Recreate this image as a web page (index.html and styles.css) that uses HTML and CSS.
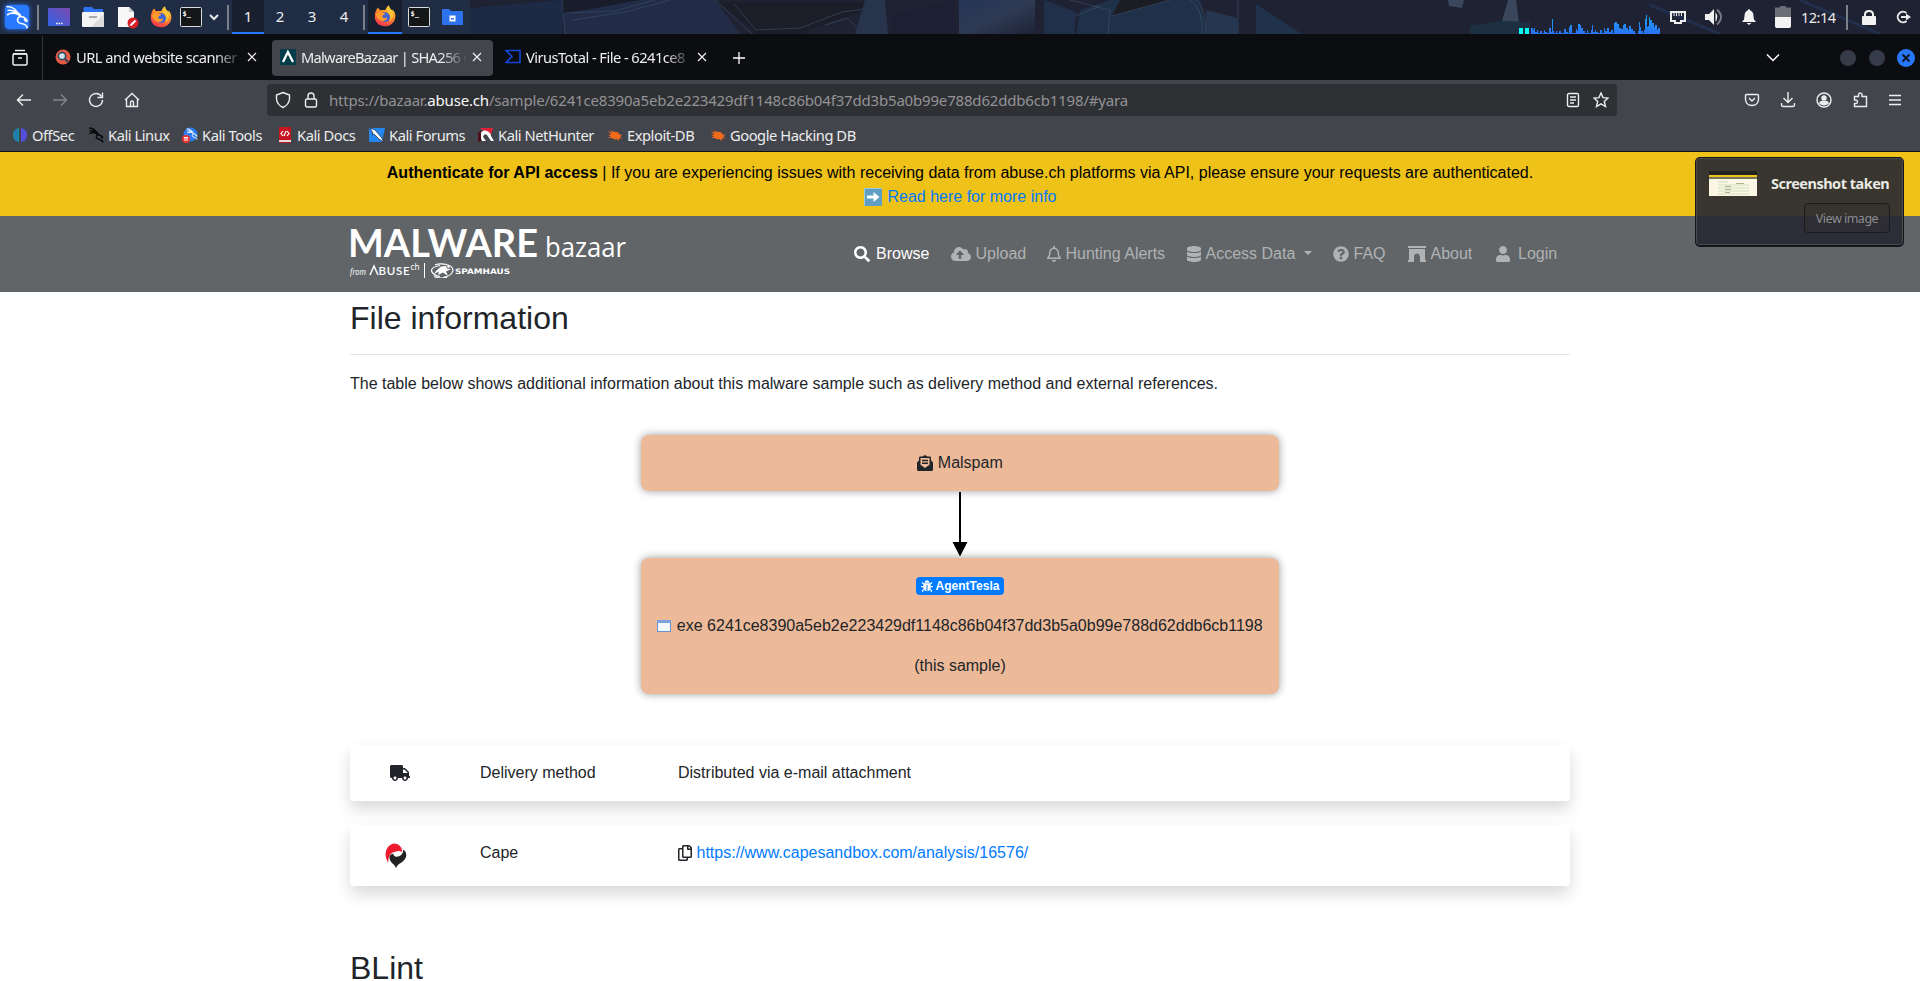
FILE: index.html
```html
<!DOCTYPE html>
<html lang="en">
<head>
<meta charset="utf-8">
<title>MalwareBazaar | SHA256</title>
<link rel="stylesheet" href="styles.css">
</head>
<body>
<svg class="defs" width="0" height="0">
  <defs>
    <linearGradient id="ffBody" x1="0.8" y1="0" x2="0.3" y2="1"><stop offset="0" stop-color="#ffd93a"/><stop offset=".45" stop-color="#ff8a2a"/><stop offset="1" stop-color="#f5314f"/></linearGradient>
    <linearGradient id="desk" x1="0" y1="1" x2="1" y2="0"><stop offset="0" stop-color="#2f62e6"/><stop offset="1" stop-color="#7c4bb0"/></linearGradient>
    <linearGradient id="cpu" x1="0" y1="0" x2="0" y2="1"><stop offset="0" stop-color="#18a4f0"/><stop offset="1" stop-color="#2a72f6"/></linearGradient>
    <linearGradient id="glassA" x1="0" y1="0" x2="1" y2="1"><stop offset="0" stop-color="#243556"/><stop offset=".5" stop-color="#2f3a54"/><stop offset="1" stop-color="#1c2335"/></linearGradient>
    <symbol id="firefox" viewBox="0 0 22 22"><path d="M1 8.500C2 5 3 3.500 4.500 2.500C4.500 4 5.500 5 7 5.200C9 5 10.500 5 11.500 5C12 3 13 1.500 15 .5C15.200 3.500 17 4 18.500 6C18.700 5 18.500 4.500 18.300 4C21 7 21.800 9.500 21.200 13C20.300 18 16 21.300 11 21.300C5 21.300 .7 17 .8 11.500z" fill="url(#ffBody)"/><circle cx="11" cy="12.200" r="4.900" fill="#3d63d8"/><path d="M2 9C4 6.200 7 6.500 9 8L11.500 8.500C10 10 8.500 10 8.300 11.500C9 14 12 13 13 12C13.500 15 10 17 7 15.800C3.500 14.500 2 12 2 9z" fill="#ff9a2c"/><path d="M15 .5C11 3 13 7 15.500 9C17 11.500 16.500 15 14.500 17C20 14 20 8 18 5.500C16.500 4 15.300 3.500 15 .5z" fill="#ffc534"/></symbol>
    <symbol id="term" viewBox="0 0 22 20"><rect x=".5" y=".5" width="21" height="19" rx="1" fill="#151617" stroke="#d9dadb"/><text x="2.500" y="9" class="term-prompt" fill="#fff">$_</text></symbol>
    <symbol id="dragon" viewBox="0 0 24 24"><path d="M1.500 1.500Q6.500 1.500 9.500 4L13 8M2.500 5.500Q8 4.500 13 8M2 10Q7 6.500 13 8M6 8.500Q12 7.500 15 11.500M13 8Q16 10 15.500 11.500Q12.500 12 12.500 15Q13 18.500 17.500 18.800Q21.500 19.500 22.500 23.500M15.500 11.500Q20 11.500 22.500 16.500M19 14L21.500 17" fill="none"/></symbol>
    <symbol id="spider" viewBox="0 0 16 16"><path d="M1 4L5 6L4 3L7 5C9 4 12 5 13 8L15 7L13.500 10L15 12L12 11C12 12 12 13 11 14L10 12C8 13 6 12 5 11L1 11L4 9.500L1 8L4 8z" fill="#f06a1c"/></symbol>
  </defs>
</svg>

<header class="panel">
  <svg class="wallpaper" viewBox="0 0 1920 34" preserveAspectRatio="none">
    <rect width="1920" height="34" fill="#1e2233"/>
    <rect width="470" height="34" fill="#212c45"/>
    <path d="M470 8L562 0V34H470z" fill="#1d2a45"/>
    <path d="M562 0H690L562 14z" fill="#191c2a"/><path d="M562 14L640 0H715L740 34H564z" fill="#222c47"/>
    <path class="edge" d="M562 0L565 34M565 13L615 11L655 0M572 20L625 12L670 0M715 0L752 34"/>
    <path d="M718 2H862L868 9L830 22L798 34H758z" fill="#1b1d29"/><path class="edge" d="M734 4L756 30L800 28L842 12L865 9M825 25L848 18L858 30"/>
    <path d="M865 0H885L888 34H855z" fill="#28344c"/><path d="M890 15L956 0V34H893z" fill="#1d2033"/>
    <path d="M959 0H1035V34H959z" fill="url(#glassA)"/><path d="M1044 0L1076 12L1074 34H1044z" fill="#20304a"/>
    <path d="M1080 10L1110 0H1200L1208 34H1076z" fill="#1f3149"/><path d="M1120 0H1170L1112 16z" fill="#1c1c23"/>
    <path class="edge" d="M1070 0L1110 10L1108 34M1076 16L1100 6M1190 0C1204 12 1200 20 1203 34M1196 0C1208 12 1204 22 1206 34M1238 0V34M1112 16L1170 0"/>
    <path d="M1206 10L1238 18V34H1206z" fill="#263550"/><path d="M1256 4L1302 34H1256z" fill="#1f314b"/>
    <path d="M1448 0H1464L1462 8L1449 6zM1508 0L1502 21L1519 23L1516 0z" fill="#39465c"/><path d="M1470 26L1502 21L1530 22V34H1470z" fill="#1d3042"/>
    <path d="M1650 5L1720 34M1800 0L1880 34" stroke="#222f4c" stroke-width="3" fill="none"/>
  </svg>
  <div class="panel-left">
    <svg class="kali" width="24" height="24" viewBox="0 0 24 24"><rect width="24" height="24" rx="3" fill="#2879ff"/><use href="#dragon" stroke="#fff" stroke-width="1.600"/></svg>
    <i class="sep"></i>
    <svg width="22" height="18"><rect width="22" height="18" rx="1" fill="url(#desk)"/><path d="M8 15.500h1.500M10.500 15.500H12M13 15.500h1.500" stroke="#fff" stroke-width="1.500"/></svg>
    <svg width="22" height="20"><path d="M1.500 1Q1.500 0 2.500 0H10L12 2H20Q21 2 21 3V8H1.500z" fill="#2c72ec"/><rect y="5" width="22" height="15" rx="1" fill="#f3f3f3"/><path d="M22 7V20H9z" fill="#dcdcdc"/><path d="M7 10h8" stroke="#aaa" stroke-width="2"/></svg>
    <svg class="doc" width="22" height="23"><path d="M1 1H12L17 6V21H1z" fill="#f7f7f7"/><path d="M12 1V6H17z" fill="#ccc"/><circle cx="16" cy="17" r="5.500" fill="#d81f26"/><path d="M13.500 19.500L18.500 14.500" stroke="#fff" stroke-width="2"/></svg>
    <svg class="ff" width="22" height="22"><use href="#firefox"/></svg>
    <svg class="tm" width="22" height="20"><use href="#term"/></svg>
    <svg class="chev" width="10" height="7"><path d="M1 1L5 5L9 1" stroke="#e8e9eb" stroke-width="2" fill="none"/></svg>
    <i class="sep"></i>
    <div class="spaces"><span class="on">1</span><span>2</span><span>3</span><span>4</span></div>
    <i class="sep"></i>
    <span class="task on"><svg width="22" height="22"><use href="#firefox"/></svg></span>
    <span class="task"><svg width="22" height="20"><use href="#term"/></svg></span>
    <span class="task"><svg width="22" height="17"><path d="M0 1Q0 0 1 0H7L9 2H20Q21 2 21 3V16H1Q0 16 0 15z" fill="#2c72ec"/><rect x="7.500" y="6.500" width="6" height="6" fill="#fff"/><rect x="9" y="9" width="3" height="1.500" fill="#2c72ec"/></svg></span>
  </div>
  <div class="panel-right">
    <svg class="graph" width="141" height="34" viewBox="0 0 141 34"><path d="M0 28h4v6H0zM6 28h4v6H6z" fill="#0fe"/><path fill="url(#cpu)" d="M12 34V28h2V30h1V28h1V32h2V30h1V33h2V31h2V33h2V30h1V32h2V33h2V28h2V32h1V19h1V31h1V33h2V31h1V33h2V31h2V33h3V29h2V32h2V33h1V27h1V25h2V33h4V29h1V31h1V24h2V25h1V28h2V31h2V33h2V30h1V33h3V30h1V25h1V32h2V30h1V32h2V33h2V30h2V33h2V28h1V31h2V28h2V32h2V30h2V33h1V23h1V22h2V24h2V28h2V29h2V25h1V24h2V28h2V30h1V26h2V29h2V31h2V33h1V34h2V31h1V22h1V27h1V31h2V33h1V30h1V19h1V15h1V27h1V26h1V17h1V20h2V23h2V27h1V25h2V30h1V28h2V33h1V31h1V34h2V31h1V27h2V28h1V34z"/></svg>
    <svg width="18" height="15"><path d="M2 2H16V11H12V13H6V11H2z" fill="none" stroke="#eceded" stroke-width="2"/><path d="M5 2v4M7.500 2v4M10 2v4M12.500 2v4" stroke="#eceded"/></svg>
    <svg width="18" height="18"><path d="M0 6H4L9 1V17L4 12H0z" fill="#f0f0f0"/><path d="M10.500 4Q14 9 10.500 14z" fill="#f0f0f0"/><path d="M12 1.500Q20 9 12 16.500" stroke="#767a82" stroke-width="2" fill="none"/></svg>
    <svg width="14" height="16"><path d="M7 0Q8.300 .5 8.300 1.500Q11.500 2.500 11.500 7L12 10.500L14 13H0L2 10.500L2.500 7Q2.500 2.500 5.700 1.500Q5.700 .5 7 0zM4.500 14H9.500L7 16z" fill="#f1f1f1"/></svg>
    <svg width="16" height="22"><path d="M5 0H11V1.500H16V20Q16 22 14 22H2Q0 22 0 20V1.500H5z" fill="#6b6e76"/><path d="M0 11H16V20Q16 22 14 22H2Q0 22 0 20z" fill="#f3f3f3"/></svg>
    <time>12:14</time>
    <i class="sep"></i>
    <svg width="14" height="15"><rect y="6" width="14" height="9" rx="1" fill="#f1f1f1"/><path d="M3 7V4.500Q3 1 7 1Q11 1 11 4.500V7" stroke="#f1f1f1" stroke-width="2" fill="none"/></svg>
    <svg width="15" height="14"><path d="M10.500 3A5.300 5.300 0 1 0 10.500 11" stroke="#e6e7e8" stroke-width="2" fill="none"/><path d="M5 7H10" stroke="#e6e7e8" stroke-width="2"/><path d="M10 3.500L15 7L10 10.500z" fill="#e6e7e8"/></svg>
  </div>
</header>

<nav class="tabs">
  <div class="all-tabs"><svg width="18" height="18" viewBox="0 0 18 18" fill="none" stroke="#eceded" stroke-width="1.500"><path d="M4 1.500H14M2 4.800H16"/><rect x="2" y="5" width="14" height="11" rx="1.500"/><path d="M7 9h4"/></svg></div>
  <div class="tab"><svg class="fav" width="16" height="16"><circle cx="8" cy="8" r="7.500" fill="#e45b45"/><circle cx="7" cy="7" r="3.600" fill="#cde3ee" stroke="#26445c" stroke-width="1.500"/><path d="M10 10L13 13" stroke="#26445c" stroke-width="2"/></svg><span class="t t1">URL and website scanner -</span><svg class="x" width="10" height="10"><path d="M1 1L9 9M9 1L1 9"/></svg></div>
  <div class="tab active"><svg class="fav" width="16" height="16"><rect width="16" height="16" fill="#053c4c"/><path d="M3 13L7.900 3L13 13" fill="none" stroke="#fff" stroke-width="2.300"/></svg><span class="t t2">MalwareBazaar | SHA256 6</span><svg class="x" width="10" height="10"><path d="M1 1L9 9M9 1L1 9"/></svg></div>
  <div class="tab"><svg class="fav" width="16" height="16"><path d="M1 1.500H15V13.500H1L7 7.500z" fill="none" stroke="#1247d8" stroke-width="1.600"/></svg><span class="t t3">VirusTotal - File - 6241ce8</span><svg class="x" width="10" height="10"><path d="M1 1L9 9M9 1L1 9"/></svg></div>
  <svg class="plus" width="12" height="12"><path d="M6 0V12M0 6H12" stroke="#fff" stroke-width="1.300"/></svg>
  <div class="win">
    <svg width="14" height="9"><path d="M1 1.500L7 7.500L13 1.500" stroke="#fff" stroke-width="1.500" fill="none"/></svg>
    <i></i><i></i><b><svg width="10" height="10"><path d="M1.500 1.500L8.500 8.500M8.500 1.500L1.500 8.500" stroke="#111728" stroke-width="2"/></svg></b>
  </div>
</nav>

<div class="toolbar">
  <div class="nav-icons">
    <svg width="16" height="16"><path d="M15 8H1.500M7 2.500L1.500 8L7 13.500"/></svg>
    <svg class="dim" width="16" height="16"><path d="M1 8H14.500M9 2.500L14.500 8L9 13.500"/></svg>
    <svg width="16" height="16"><path d="M13.500 4.500A6.500 6.500 0 1 0 14.500 8M14.500 .5V5.500H9.500"/></svg>
    <svg width="16" height="16"><path d="M1 8L8 1.500L15 8M2.500 7V14.500H13.500V7M6.500 14.500V10.500Q6.500 9 8 9Q9.500 9 9.500 10.500V14.500"/></svg>
  </div>
  <div class="url">
    <svg width="16" height="18"><path d="M8 1.500L14.500 4V8Q14 13.500 8 16.500Q2 13.500 1.500 8V4z"/></svg>
    <svg width="14" height="16"><rect x="1.500" y="7" width="11" height="8" rx="1.500"/><path d="M4 7V4Q4 1 7 1Q10 1 10 4V7"/></svg>
    <span class="addr">https://bazaar.<b>abuse.ch</b>/sample/6241ce8390a5eb2e223429df1148c86b04f37dd3b5a0b99e788d62ddb6cb1198/#yara</span>
    <svg class="reader" width="14" height="16"><rect x="1.500" y="1.500" width="11" height="13" rx="1.500"/><path d="M4 5H10M4 8H10M4 11H8"/></svg>
    <svg width="16" height="16"><path d="M8 1L10 5.600L15 6L11.300 9.400L12.500 14.500L8 11.800L3.500 14.500L4.700 9.400L1 6L6 5.600z"/></svg>
  </div>
  <div class="right-icons">
    <svg width="16" height="16"><path d="M2.500 2.500H13.500Q14.500 2.500 14.500 3.500V7.500Q14 13.500 8 13.500Q2 13.500 1.500 7.500V3.500Q1.500 2.500 2.500 2.500zM5 6L8 9L11 6"/></svg>
    <svg width="16" height="16"><path d="M8 0V10M3.500 6L8 10.500L12.500 6M1.500 11V12.500Q1.500 14.500 3.500 14.500H12.500Q14.500 14.500 14.500 12.500V11"/></svg>
    <svg width="16" height="16"><circle cx="8" cy="8" r="7"/><circle cx="8" cy="6" r="2" fill="#eceded"/><path d="M4 11.500Q4 9.500 6 9.500H10Q12 9.500 12 11.500Q8 14 4 11.500z" fill="#eceded"/></svg>
    <svg width="16" height="16"><path d="M2.500 5.500V4.500H6.500V2.500Q7 .8 8.500 1Q10 1 10 2.500V4.500H14.500V14.500H2.500V11.500H4Q5.500 11.500 5.500 9.800Q5.500 8 4 8H2.500z"/></svg>
    <svg width="14" height="12"><path d="M1 1.500H13M1 6H13M1 10.500H13"/></svg>
  </div>
</div>

<div class="bookmarks">
  <span class="bm b1"><svg width="16" height="16"><path d="M7 1V15Q1 14 1 8Q1 2 7 1z" fill="#168da0"/><path d="M9 1V15Q15 14 15 8Q15 2 9 1z" fill="#5a4be0"/><path d="M4 2V14M12 2V14" stroke="#3e5bd0"/></svg><span>OffSec</span></span>
  <span class="bm b2"><svg width="16" height="16"><use href="#dragon" stroke="#08090a" stroke-width="2.200"/></svg><span>Kali Linux</span></span>
  <span class="bm b3"><svg width="16" height="16"><circle cx="8.500" cy="7.500" r="7" fill="#2c7bef"/><svg x="4" y="1" width="12" height="12"><use href="#dragon" stroke="#fff" stroke-width="1.800"/></svg><circle cx="4" cy="12" r="4" fill="#e33"/><path d="M2 10.500H6M3 10.500V14M5 10.500V14" stroke="#fff"/></svg><span>Kali Tools</span></span>
  <span class="bm b4"><svg width="16" height="16"><rect x="2" width="12" height="16" rx="1" fill="#c81523"/><path d="M2 13H14V15H2z" fill="#e8d9d9"/><path d="M6 4L4 6.500L6 9M10 4L12 6.500L10 9M7 9L9 4" stroke="#fff" fill="none" stroke-width="1.200"/></svg><span>Kali Docs</span></span>
  <span class="bm b5"><svg width="16" height="16"><path d="M0 1H16L13 15H0z" fill="#2486ef"/><path d="M1 1L6 3L12 10L15 15L10 12L5 7L3 8L4 6z" fill="#fff" stroke="#17253d" stroke-width=".7"/></svg><span>Kali Forums</span></span>
  <span class="bm b6"><svg width="16" height="16"><path d="M2 1H15L12 10z" fill="#e2203a"/><path d="M2 8Q4 2 9 4Q13 6 13 9L16 14H13L9 8Q6 6 5 10L8 14H4z" fill="#fff"/><path d="M0 5L3 4V14L0 15z" fill="#4b101b"/></svg><span>Kali NetHunter</span></span>
  <span class="bm b7"><svg width="16" height="16"><use href="#spider"/></svg><span>Exploit-DB</span></span>
  <span class="bm b8"><svg width="16" height="16"><use href="#spider"/></svg><span>Google Hacking DB</span></span>
</div>

<div class="page">
  <div class="banner">
    <div><b>Authenticate for API access</b> | If you are experiencing issues with receiving data from abuse.ch platforms via API, please ensure your requests are authenticated.</div>
    <div class="more"><svg width="18" height="18"><rect width="18" height="18" rx="1.500" fill="#5f9fc4"/><path d="M.5 17.500V.5H17.500" stroke="#9ccbe2" fill="none"/><path d="M3 7.500H9.500V4L15.500 9L9.500 14V10.500H3z" fill="#fff"/></svg><a>Read here for more info</a></div>
  </div>
  <div class="site-nav">
    <svg class="logo" width="280" height="56" viewBox="0 0 280 56" fill="#fff">
      <text class="lg-main" x="-2" y="34.500" textLength="190" lengthAdjust="spacingAndGlyphs">MALWARE</text>
      <text class="lg-sub" x="195" y="34.500" textLength="81" lengthAdjust="spacingAndGlyphs">bazaar</text>
      <text class="lg-from" x="0" y="53" textLength="16" lengthAdjust="spacingAndGlyphs">from</text>
      <path d="M20 53L24 44L28 53" fill="none" stroke="#fff" stroke-width="1.500"/>
      <text class="lg-abuse" x="28.500" y="53" textLength="31" lengthAdjust="spacing">BUSE</text>
      <text class="lg-ch" x="60.500" y="48" textLength="9" lengthAdjust="spacingAndGlyphs">ch</text>
      <path d="M74 41h1v16h-1z"/>
      <path d="M90 43.500Q81 45 81.500 49Q83 53.500 90 54.500M95 42.500Q103 43.500 103 48.500Q102 54 93 55.500M85 42.800Q90 41 97 42.500M84 54.500Q90 57 97 55.500" fill="none" stroke="#fff" stroke-width="1.200"/>
      <path d="M96 44L91 44.500L86 49L84 52L89 49.500L88 53L93 50.500L98 54L96 49.500L101 47L97 46.500z"/><circle cx="98.500" cy="44.500" r="1.300"/>
      <text class="lg-spam" x="105" y="51.500" textLength="55" lengthAdjust="spacingAndGlyphs">SPAMHAUS</text>
    </svg>
    <div class="links">
      <a class="on l1"><svg width="16" height="16" viewBox="0 0 512 512"><path d="M505 442.700L405.300 343c-4.500-4.500-10.600-7-17-7H372c27.600-35.300 44-79.700 44-128C416 93.100 322.900 0 208 0S0 93.100 0 208s93.100 208 208 208c48.300 0 92.700-16.400 128-44v16.300c0 6.400 2.500 12.500 7 17l99.700 99.700c9.400 9.400 24.600 9.400 33.900 0l28.300-28.300c9.400-9.400 9.400-24.600.1-34zM208 336c-70.700 0-128-57.200-128-128 0-70.700 57.200-128 128-128 70.700 0 128 57.200 128 128 0 70.700-57.200 128-128 128z"/></svg>Browse</a>
      <a class="l2"><svg width="20" height="16" viewBox="0 0 640 512"><path d="M537.600 226.600c4.100-10.700 6.400-22.400 6.400-34.600 0-53-43-96-96-96-19.700 0-38.100 6-53.300 16.200C367 64.200 315.300 32 256 32c-88.400 0-160 71.600-160 160 0 2.700.1 5.400.2 8.100C40.200 219.800 0 273.200 0 336c0 79.500 64.500 144 144 144h368c70.700 0 128-57.300 128-128 0-61.900-44-113.600-102.400-125.400zM393.400 288H328v112c0 8.800-7.200 16-16 16h-48c-8.800 0-16-7.200-16-16V288h-65.400c-14.300 0-21.400-17.200-11.300-27.300l105.400-105.400c6.200-6.200 16.400-6.200 22.600 0l105.400 105.400c10.100 10.100 2.900 27.300-11.300 27.300z"/></svg>Upload</a>
      <a class="l3"><svg width="14" height="16" viewBox="0 0 448 512"><path d="M439.390 362.290c-19.320-20.760-55.470-51.990-55.470-154.290 0-77.700-54.480-139.900-127.940-155.160V32c0-17.670-14.320-32-31.980-32s-31.980 14.330-31.980 32v20.840C118.560 68.100 64.080 130.300 64.080 208c0 102.300-36.150 133.530-55.470 154.290-6 6.450-8.660 14.160-8.610 21.710.11 16.400 12.980 32 32.100 32h383.800c19.120 0 32-15.600 32.100-32 .05-7.550-2.610-15.270-8.610-21.710zM67.530 368c21.220-27.970 44.420-74.330 44.530-159.420 0-.2-.06-.38-.06-.58 0-61.860 50.140-112 112-112s112 50.140 112 112c0 .2-.06.38-.06.58.11 85.100 23.310 131.460 44.530 159.420H67.530zM224 512c35.320 0 63.970-28.650 63.970-64H160.030c0 35.350 28.650 64 63.970 64z"/></svg>Hunting Alerts</a>
      <a class="l4"><svg width="14" height="16" viewBox="0 0 448 512"><path d="M448 73.143v45.714C448 159.143 347.667 192 224 192S0 159.143 0 118.857V73.143C0 32.857 100.333 0 224 0s224 32.857 224 73.143zM448 176v102.857C448 319.143 347.667 352 224 352S0 319.143 0 278.857V176c48.125 33.143 136.208 48.572 224 48.572S399.874 209.143 448 176zm0 160v102.857C448 479.143 347.667 512 224 512S0 479.143 0 438.857V336c48.125 33.143 136.208 48.572 224 48.572S399.874 369.143 448 336z"/></svg>Access Data<i class="caret"></i></a>
      <a class="l5"><svg width="16" height="16" viewBox="0 0 512 512"><path d="M504 256c0 136.997-111.043 248-248 248S8 392.997 8 256C8 119.083 119.043 8 256 8s248 111.083 248 248zM262.655 90c-54.497 0-89.255 22.957-116.549 63.758-3.536 5.286-2.353 12.415 2.715 16.258l34.699 26.310c5.205 3.947 12.621 3.008 16.665-2.122 17.864-22.658 30.113-35.797 57.303-35.797 20.429 0 45.698 13.148 45.698 32.958 0 14.976-12.363 22.667-32.534 33.976C247.128 238.528 216 254.941 216 296v4c0 6.627 5.373 12 12 12h56c6.627 0 12-5.373 12-12v-1.333c0-28.462 83.186-29.647 83.186-106.667 0-58.002-60.165-102-116.531-102zM256 338c-25.365 0-46 20.635-46 46 0 25.364 20.635 46 46 46s46-20.636 46-46c0-25.365-20.635-46-46-46z"/></svg>FAQ</a>
      <a class="l6"><svg width="18" height="16" viewBox="0 0 18 16"><path d="M0 0H18V2H0zM1 3H17V14H18V16H12V11Q12 7.500 9 7.500Q6 7.500 6 11V16H0V14H1z"/></svg>About</a>
      <a class="l7"><svg width="14" height="16" viewBox="0 0 448 512"><path d="M224 256c70.700 0 128-57.300 128-128S294.700 0 224 0 96 57.300 96 128s57.300 128 128 128zm89.600 32h-16.700c-22.200 10.200-46.900 16-72.900 16s-50.600-5.800-72.900-16h-16.700C60.200 288 0 348.200 0 422.400V464c0 26.500 21.500 48 48 48h352c26.500 0 48-21.500 48-48v-41.600c0-74.200-60.200-134.400-134.400-134.400z"/></svg>Login</a>
    </div>
  </div>
  <main class="content">
    <h2>File information</h2>
    <hr>
    <p>The table below shows additional information about this malware sample such as delivery method and external references.</p>
    <div class="flow">
      <div class="node"><p><svg width="16" height="16" viewBox="0 0 16 16"><path fill="#212529" fill-rule="evenodd" d="M0 7.500L2 5.200V2.700Q2 1.500 3.200 1.500H5.500L8 0L10.500 1.500H12.800Q14 1.500 14 2.700V5.200L16 7.500V14.500Q16 16 14.500 16H1.500Q0 16 0 14.500zM3.500 3V9.800L8 13L12.500 9.800V3zM5 4.700H11V6.200H5zM5 7.500H11V9H5z"/></svg> Malspam</p></div>
      <svg class="arrow" width="16" height="67"><path d="M7 1H9V51H15.500L8 65.500L.5 51H7z"/></svg>
      <div class="node">
        <p><span class="badge"><svg width="12" height="12" viewBox="0 0 12 12"><path d="M3.500 2.800Q3.600 .2 6 .2Q8.400 .2 8.500 2.800zM3 3.300H9Q10 3.300 10.300 2L11.300 2.300Q11 4 9.600 4.600V6H12V7.200H9.600Q9.600 8 9.300 8.700L11 10.300L10.800 12H9.800V10.800L8.700 9.800Q8 11 6.500 11.300V5H5.500V11.300Q4 11 3.300 9.800L2.200 10.800V12H1.200L1 10.300L2.700 8.700Q2.400 8 2.400 7.200H0V6H2.400V4.600Q1 4 .7 2.300L1.700 2Q2 3.300 3 3.300z" fill="#fff"/></svg> AgentTesla</span></p>
        <p class="hash"><svg width="14" height="12"><rect x=".5" y=".5" width="13" height="11" fill="#f4f8fe" stroke="#6c93cf"/><path d="M0 0H14V3H0z" fill="#78a3df"/></svg>exe 6241ce8390a5eb2e223429df1148c86b04f37dd3b5a0b99e788d62ddb6cb1198</p>
        <p>(this sample)</p>
      </div>
    </div>
    <div class="card row1">
      <span class="c1"><svg class="truck" width="20" height="16" viewBox="0 0 640 512"><path fill="#212529" d="M624 352h-16V243.900c0-12.700-5.100-24.900-14.100-33.900L494 110.100c-9-9-21.200-14.100-33.900-14.100H416V48c0-26.500-21.500-48-48-48H48C21.500 0 0 21.500 0 48v320c0 26.500 21.500 48 48 48h16c0 53 43 96 96 96s96-43 96-96h128c0 53 43 96 96 96s96-43 96-96h48c8.800 0 16-7.200 16-16v-32c0-8.800-7.200-16-16-16zM160 464c-26.500 0-48-21.500-48-48s21.500-48 48-48 48 21.500 48 48-21.500 48-48 48zm320 0c-26.500 0-48-21.500-48-48s21.500-48 48-48 48 21.500 48 48-21.500 48-48 48zm80-208H416V144h44.100l99.900 99.900V256z"/></svg></span>
      <span class="c2">Delivery method</span><span class="c3">Distributed via e-mail attachment</span>
    </div>
    <div class="card row2">
      <span class="c1"><svg class="cape" width="22" height="25"><path d="M3 20Q-2 10 3 4Q8 -2 14 2Q17.500 5 17 9Q14.500 7.500 11 8.500Q3 9.500 3 20z" fill="#ee1b2e"/><path d="M18.500 6.500Q22 9 21 14Q19.500 18 14 21Q12 22.500 11 25Q9.500 21.500 7 20Q4 17 4.500 13Q5.500 11 8.500 10.500Q8 13 11 13.800Q17.500 14 18.500 6.500z" fill="#222"/></svg></span>
      <span class="c2">Cape</span><span class="c3"><svg class="copy" width="14" height="16" viewBox="0 0 448 512"><path fill="#212529" d="M433.941 65.941l-51.882-51.882A48 48 0 0 0 348.118 0H176c-26.510 0-48 21.490-48 48v48H48c-26.510 0-48 21.490-48 48v320c0 26.510 21.490 48 48 48h224c26.510 0 48-21.490 48-48v-48h80c26.510 0 48-21.490 48-48V99.882a48 48 0 0 0-14.059-33.941zM266 464H54a6 6 0 0 1-6-6V150a6 6 0 0 1 6-6h74v224c0 26.510 21.490 48 48 48h96v42a6 6 0 0 1-6 6zm128-96H182a6 6 0 0 1-6-6V54a6 6 0 0 1 6-6h106v88c0 13.255 10.745 24 24 24h88v202a6 6 0 0 1-6 6zm6-256h-64V48h9.632c1.591 0 3.117.632 4.243 1.757l48.368 48.368a6 6 0 0 1 1.757 4.243V112z"/></svg><a>https://www.capesandbox.com/analysis/16576/</a></span>
    </div>
    <h2 class="blint">BLint</h2>
  </main>
</div>

<aside class="toast">
  <div class="toast-top">
    <svg width="48" height="25"><rect width="48" height="25" fill="#fbf7e4"/><rect width="48" height="4" fill="#22231f"/><rect y="4" width="48" height="2" fill="#efc11b"/><rect y="6" width="48" height="2" fill="#77745e"/><path d="M9 11h10M9 14h31M9 17h31M9 20h31M9 23h31" stroke="#cfe0bd"/><path d="M16 15.500h6M16 18.500h6M16 21.500h5M27 12.500h8" stroke="#a9b58e"/></svg>
    <strong>Screenshot taken</strong>
  </div>
  <div class="btn">View image</div>
</aside>
</body>
</html>
```
FILE: styles.css
```css
* { box-sizing: border-box; }
body { margin: 0; width: 1920px; height: 981px; overflow: hidden; background: #fff; font-family: "Noto Sans", sans-serif; font-size: 15px; color: #eceded; }
svg { display: block; flex: none; }
.defs { position: absolute; }
.term-prompt { font: bold 7px "DejaVu Sans Mono", monospace; }

/* desktop panel */
.panel { position: relative; height: 34px; display: flex; justify-content: space-between; overflow: hidden; }
.wallpaper { position: absolute; inset: 0; width: 1920px; height: 34px; }
.edge { fill: none; stroke: #40566f; stroke-opacity: .55; }
.panel-left, .panel-right { position: relative; display: flex; align-items: center; height: 34px; }
.panel-left { padding-left: 5px; }
.sep { display: block; width: 2px; height: 25px; background: #7c8189; }
.kali { margin-right: 8px; box-shadow: 0 0 5px #2879ff; border-radius: 3px; }
.kali + .sep { margin-right: 9px; }
.kali + .sep + svg { margin-right: 12px; }
.doc { margin: 0 9px 0 13px; }
.ff { margin: 0 8px 0 2px; }
.chev { margin: 0 8px 0 7px; }
.spaces { display: flex; margin: 0 3px; font-size: 15px; line-height: 33px; height: 34px; }
.spaces span { width: 32px; text-align: center; }
.spaces .on, .task.on { background: #18202f; border-bottom: 2px solid #2777ff; }
.spaces + .sep { margin-right: 3px; }
.task { width: 34px; height: 34px; display: flex; align-items: center; justify-content: center; }
.panel-right { padding-right: 9px; }
.graph { margin-right: 9px; }
.graph + svg { margin-right: 18px; }
.graph + svg + svg { margin-right: 19px; }
.graph + svg + svg + svg { margin-right: 19px; }
.panel-right time { width: 34px; margin: 0 11px 0 10px; font-size: 14.5px; letter-spacing: -.5px; white-space: nowrap; }
.graph + svg + svg + svg + svg { margin-right: 0; }
.panel-right .sep + svg { margin: 0 20px 0 14px; }

/* tab strip */
.tabs { height: 46px; padding-top: 1px; background: #0c0d11; display: flex; align-items: center; }
.all-tabs { width: 43px; height: 44px; padding-left: 11px; display: flex; align-items: center; border-right: 1px solid #34363b; }
.tab { width: 221px; height: 36px; margin-left: 4px; padding: 0 8px 1px; display: flex; align-items: center; border-radius: 4px; }
.tab.active { background: #43454c; }
.fav { margin-right: 5px; }
.t { width: 166px; margin-right: 5px; padding-bottom: 1px; overflow: hidden; white-space: nowrap; font-size: 14.7px; letter-spacing: -.55px; mask-image: linear-gradient(90deg, #000 84%, transparent 100%); }
.t2 { letter-spacing: -.75px; }
.x path { stroke: #f1f1f1; stroke-width: 1.2; fill: none; }
.plus { margin-left: 15px; }
.win { margin-left: auto; display: flex; align-items: center; padding-right: 5px; }
.win > svg { margin-right: 60px; }
.win i, .win b { display: flex; align-items: center; justify-content: center; border-radius: 50%; }
.win i { width: 16px; height: 16px; margin-right: 13px; background: #363b49; }
.win i + b { width: 18px; height: 18px; margin-left: -1px; background: #2777ff; }

/* browser toolbar */
.toolbar { height: 40px; background: #43454c; display: flex; align-items: center; }
.nav-icons { display: flex; gap: 20px; width: 267px; padding-left: 16px; }
.toolbar svg { fill: none; stroke: #eceded; stroke-width: 1.4; }
.toolbar svg.dim { stroke: #85878c; }
.url { width: 1350px; height: 32px; padding: 0 8px; display: flex; align-items: center; border-radius: 4px; background: #2f3034; }
.url svg + svg { margin-left: 13px; }
.addr { flex: 1; margin-left: 11px; color: #929397; white-space: nowrap; letter-spacing: -.18px; }
.addr b { font-weight: 400; color: #fbfbfb; }
.right-icons { display: flex; align-items: center; gap: 20px; margin-left: 127px; }

/* bookmarks bar */
.bookmarks { height: 32px; padding: 0 0 1px 12px; background: #43454c; border-bottom: 1px solid #111215; display: flex; align-items: center; }
.bm { display: flex; align-items: center; gap: 4px; white-space: nowrap; font-size: 14.7px; letter-spacing: -.45px; }
.b1 { width: 76px; } .b2 { width: 94px; } .b3 { width: 95px; } .b4 { width: 92px; }
.b5 { width: 109px; } .b6 { width: 129px; } .b7 { width: 103px; }

/* web page */
.page { font: 16px/24px "Liberation Sans", Arial, sans-serif; color: #212529; }
.page a { color: #007bff; }
.banner { height: 64px; padding-top: 9px; background: #eec219; color: #000; text-align: center; }
.more { display: flex; justify-content: center; align-items: center; gap: 6px; }
.site-nav { height: 76px; padding: 6px 0 0 350px; background: #616568; display: flex; }
.links { display: flex; height: 64px; align-items: center; margin-left: 224px; }
.links a { display: flex; align-items: center; color: #b0b2b3; white-space: nowrap; }
.links a.on { color: #fff; }
.links svg { fill: currentColor; margin-right: 4.5px; }
.links .l1 svg { margin-right: 6px; }
.l1 { width: 97px; } .l2 { width: 96px; } .l3 { width: 140px; } .l4 { width: 145.5px; } .l5 { width: 75px; } .l6 { width: 88.5px; }
.links .l5 svg, .links .l6 svg { margin-right: 5px; }
.links .l7 svg { margin-right: 8px; }
.caret { margin-left: 9px; margin-top: -3px; border: 4.8px solid transparent; border-top-color: currentColor; border-bottom: 0; }
.lg-main { font: bold 38px Lato, "Noto Sans", sans-serif; }
.lg-sub { font: 27px "Open Sans", "Noto Sans", sans-serif; }
.lg-from { font: italic 8.5px "Noto Sans", sans-serif; }
.lg-abuse { font: 600 11.5px Lato, "Noto Sans", sans-serif; }
.lg-ch { font: 8px "Noto Sans", sans-serif; }
.lg-spam { font: bold 7.5px "DejaVu Sans", sans-serif; }
.content { width: 1220px; margin: 0 auto; padding-top: 7px; }
h2 { margin: 0; font-size: 32px; font-weight: 400; line-height: 38px; }
hr { margin: 17px 0 16.6px; border: 0; border-top: 1px solid #e3e4e5; }
p { margin: 0 0 16px; }
.flow { display: flex; flex-direction: column; align-items: center; margin-top: 39.4px; }
.node { width: 638px; padding: 16px 16px 0; border-radius: 8px; background: #edba99; box-shadow: 0 0 8px rgba(0, 0, 0, .4); text-align: center; }
.node p { display: flex; justify-content: center; align-items: center; gap: 4.5px; white-space: nowrap; height: 24px; }
.badge { display: flex; align-items: center; gap: 3px; height: 18px; margin-top: 1px; padding: 0 5px; border-radius: 4px; background: #007bff; color: #fff; font-size: 12px; font-weight: 700; }
.arrow { position: relative; z-index: 1; fill: #000; }
.node p.hash { gap: 5.5px; }
.hash svg { margin-top: 1px; }
.card { display: flex; border-radius: 4px; box-shadow: 0 8px 16px rgba(0, 0, 0, .15); padding-top: 16.5px; background: #fff; }
.row1 { height: 56px; margin-top: 51px; }
.row2 { height: 61px; margin-top: 24px; }
.c1 { width: 130px; }
.c2 { width: 198px; }
.c3 { display: flex; }
.truck { margin: 3.5px 0 0 40px; }
.cape { margin: 1.5px 0 0 35px; }
.copy { margin: 3.5px 4.5px 0 0; }
.blint { margin-top: 63px; }

/* desktop notification */
.toast { position: absolute; left: 1695px; top: 157px; width: 209px; height: 90px; padding: 13px 13px 0; border: 1px solid #15171c; border-bottom-width: 2px; border-radius: 5px; background: rgba(38, 40, 50, .91); box-shadow: inset 0 0 0 1px #4a4b4c; }
.toast-top { display: flex; gap: 14px; align-items: center; }
.toast strong { font-size: 14.5px; letter-spacing: -.5px; line-height: 25px; white-space: nowrap; color: #e9e9e4; }
.btn { width: 86px; height: 30px; margin: 7px 0 0 auto; border: 1px solid #1a1b1e; border-radius: 4px; color: #8b8c8c; font-size: 12.5px; letter-spacing: -.5px; line-height: 29px; text-align: center; background: rgba(50, 45, 45, .3); }
```
